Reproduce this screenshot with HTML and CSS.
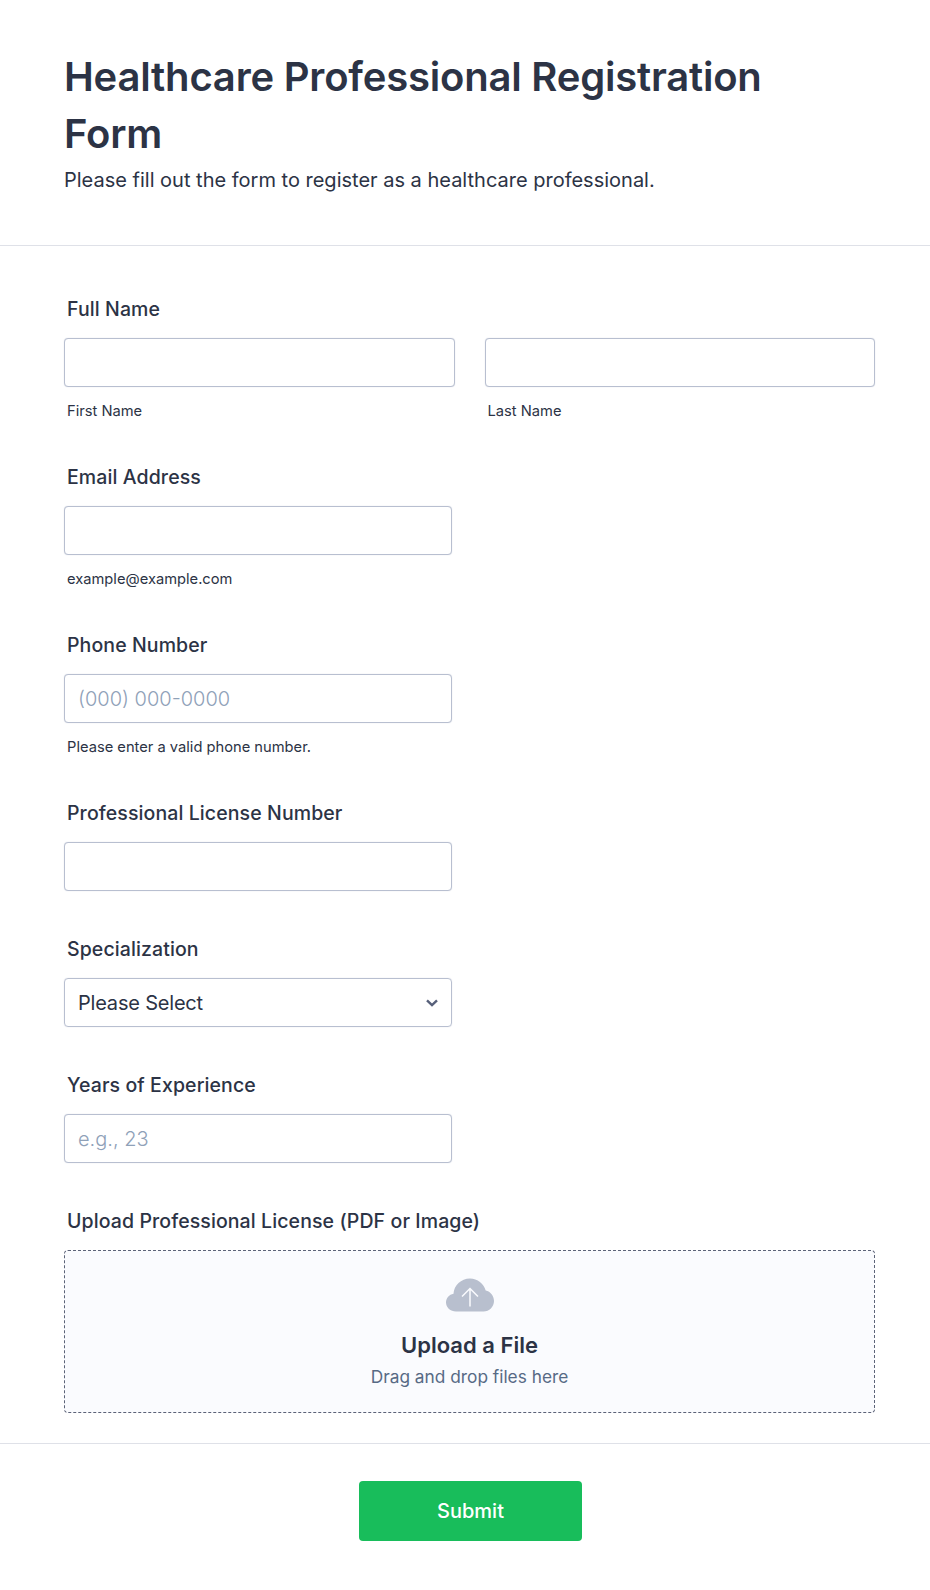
FILE: index.html
```html
<!DOCTYPE html>
<html lang="en">
<head>
    <meta charset="UTF-8">
    <meta name="viewport" content="width=device-width, initial-scale=1.0">
    <title>Healthcare Professional Registration Form</title>
    <link rel="stylesheet" href="styles.css">
</head>
<body>
    <form class="form">
        <header class="form-header">
            <h1>Healthcare Professional Registration Form</h1>
            <p>Please fill out the form to register as a healthcare professional.</p>
        </header>

        <main class="form-body">
            <div class="field field-name">
                <label class="field-label">Full Name</label>
                <div class="name-row">
                    <div class="name-col">
                        <input class="text-input" type="text">
                        <span class="hint">First Name</span>
                    </div>
                    <div class="name-col">
                        <input class="text-input" type="text">
                        <span class="hint">Last Name</span>
                    </div>
                </div>
            </div>

            <div class="field field-tight">
                <label class="field-label">Email Address</label>
                <input class="text-input half" type="email">
                <span class="hint">example@example.com</span>
            </div>

            <div class="field field-tight">
                <label class="field-label">Phone Number</label>
                <input class="text-input half" type="tel" placeholder="(000) 000-0000">
                <span class="hint">Please enter a valid phone number.</span>
            </div>

            <div class="field field-tight">
                <label class="field-label">Professional License Number</label>
                <input class="text-input half" type="text">
            </div>

            <div class="field">
                <label class="field-label">Specialization</label>
                <div class="select half">
                    <span>Please Select</span>
                    <svg width="12" height="8" viewBox="0 0 12 8" fill="none">
                        <path d="M1 1.400 6 6.200l5-4.800" stroke="#57607a" stroke-width="2.400"/>
                    </svg>
                </div>
            </div>

            <div class="field">
                <label class="field-label">Years of Experience</label>
                <input class="text-input half" type="text" placeholder="e.g., 23">
            </div>

            <div class="field field-upload">
                <label class="field-label">Upload Professional License (PDF or Image)</label>
                <div class="dropzone">
                    <svg class="cloud" width="48" height="34" viewBox="0 0 48 34">
                        <path fill="#b8bfce" d="M10 33.500C4.500 33.500 0 29.500 0 24.500 0 20 3.200 16.500 7.500 15.700 8 7.500 15 .5 24 .5c7.500 0 13.800 5 15.700 12 4.800 1 8.300 5.500 8.300 10.500 0 5.700-4.700 10.500-10.500 10.500z"/>
                        <path fill="none" stroke="#fafbfe" stroke-width="1.500" d="M24 28.500V11M16 18.500 24 10.500l8 8"/>
                    </svg>
                    <div class="dropzone-title">Upload a File</div>
                    <div class="dropzone-sub">Drag and drop files here</div>
                </div>
            </div>
        </main>

        <footer class="form-footer">
            <button class="submit" type="button">Submit</button>
        </footer>
    </form>
</body>
</html>
```

FILE: styles.css
```css
:root {
    --text: #2c3345;
    --border: #b8bfd0;
    --divider: #dfe1e8;
    --placeholder: #8fa1b8;
    --green: #18bd5b;
}

* {
    box-sizing: border-box;
}

body {
    margin: 0;
    background: #fff;
    color: var(--text);
    font-family: Inter, "Liberation Sans", sans-serif;
}

.form-header {
    height: 246px;
    padding: 48px 64px 0;
    border-bottom: 1px solid var(--divider);
}

.form-header h1 {
    margin: 0;
    font-size: 40px;
    line-height: 57px;
    font-weight: 600;
    letter-spacing: -0.2px;
}

.form-header p {
    margin: 0;
    padding-top: 2px;
    font-size: 20px;
    line-height: 32px;
    font-weight: 400;
}

.form-body {
    padding: 0 55px 0 64px;
}

.field {
    padding-top: 45px;
}

.field-name {
    padding-top: 50px;
}

.field-tight {
    padding-top: 44px;
}

.field-label {
    display: block;
    margin: 0 0 16px 3px;
    font-size: 19.500px;
    line-height: 26px;
    font-weight: 500;
    letter-spacing: 0.1px;
}

.name-row {
    display: flex;
    gap: 30px;
}

.name-col {
    flex: 1;
}

.text-input {
    display: block;
    width: 100%;
    height: 49px;
    padding: 0 13px;
    border: 1px solid var(--border);
    border-radius: 4px;
    background: #fff;
    box-shadow: 0 0 1px rgba(184, 191, 208, 0.7);
    color: var(--text);
    font-family: inherit;
    font-size: 20px;
}

.text-input::placeholder {
    color: var(--placeholder);
    opacity: 1;
    font-weight: 300;
}

.half {
    width: 388px;
}

.hint {
    display: block;
    margin: 15px 0 0 3px;
    font-size: 14.700px;
    line-height: 18px;
}

.select {
    display: flex;
    align-items: center;
    justify-content: space-between;
    height: 49px;
    padding: 0 13px;
    border: 1px solid var(--border);
    border-radius: 4px;
    box-shadow: 0 0 1px rgba(184, 191, 208, 0.7);
    font-size: 20px;
    letter-spacing: -0.2px;
}

.dropzone {
    display: flex;
    flex-direction: column;
    align-items: center;
    height: 163px;
    padding-top: 27px;
    border: 1px dashed #5c6378;
    border-radius: 4px;
    background: #fafbfe;
}

.dropzone-title {
    margin-top: 17px;
    font-size: 22px;
    line-height: 32px;
    font-weight: 600;
}

.dropzone-sub {
    margin-top: 3px;
    font-size: 17.300px;
    line-height: 26px;
    color: #576a85;
}

.form-footer {
    display: flex;
    justify-content: center;
    margin-top: 30px;
    padding: 37px 0 0 11px;
    border-top: 1px solid var(--divider);
}

.submit {
    width: 223px;
    height: 60px;
    border: none;
    border-radius: 4px;
    background: var(--green);
    color: #fff;
    font-family: inherit;
    font-size: 20px;
    font-weight: 500;
}
```
